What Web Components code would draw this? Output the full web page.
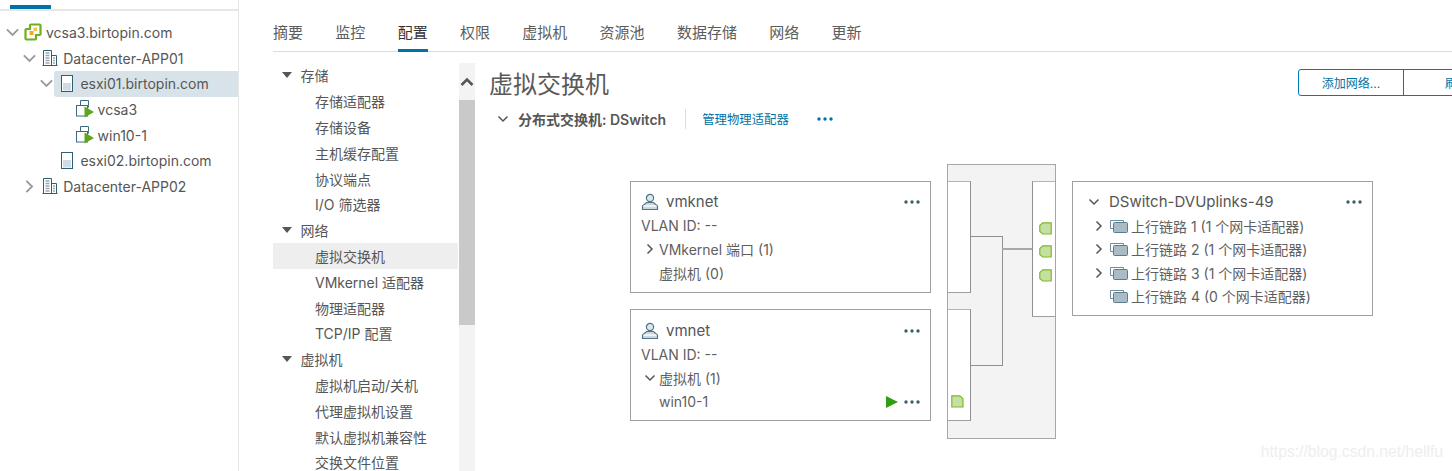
<!DOCTYPE html>
<html lang="zh-CN">
<head>
<meta charset="utf-8">
<title>虚拟交换机</title>
<style>
html, body { margin: 0; height: 471px; overflow: hidden; background: #fff; }
body {
	display: flex;
	font-family: Inter, "Noto Sans CJK SC", sans-serif;
	color: #565656;
}
</style>
</head>
<body>
<vc-tree>
	<vc-tree-row depth="0" twisty="open" icon="vcenter">vcsa3.birtopin.com</vc-tree-row>
	<vc-tree-row depth="1" twisty="open" icon="datacenter">Datacenter-APP01</vc-tree-row>
	<vc-tree-row depth="2" twisty="open" icon="host" selected>esxi01.birtopin.com</vc-tree-row>
	<vc-tree-row depth="3" icon="vm">vcsa3</vc-tree-row>
	<vc-tree-row depth="3" icon="vm">win10-1</vc-tree-row>
	<vc-tree-row depth="2" icon="host">esxi02.birtopin.com</vc-tree-row>
	<vc-tree-row depth="1" twisty="closed" icon="datacenter">Datacenter-APP02</vc-tree-row>
</vc-tree>

<vc-main>
	<vc-tabs slot="tabs">
		<vc-tab>摘要</vc-tab>
		<vc-tab>监控</vc-tab>
		<vc-tab active>配置</vc-tab>
		<vc-tab>权限</vc-tab>
		<vc-tab>虚拟机</vc-tab>
		<vc-tab>资源池</vc-tab>
		<vc-tab>数据存储</vc-tab>
		<vc-tab>网络</vc-tab>
		<vc-tab>更新</vc-tab>
	</vc-tabs>

	<vc-nav slot="nav">
		<vc-nav-item group>存储</vc-nav-item>
		<vc-nav-item>存储适配器</vc-nav-item>
		<vc-nav-item>存储设备</vc-nav-item>
		<vc-nav-item>主机缓存配置</vc-nav-item>
		<vc-nav-item>协议端点</vc-nav-item>
		<vc-nav-item>I/O 筛选器</vc-nav-item>
		<vc-nav-item group>网络</vc-nav-item>
		<vc-nav-item selected>虚拟交换机</vc-nav-item>
		<vc-nav-item>VMkernel 适配器</vc-nav-item>
		<vc-nav-item>物理适配器</vc-nav-item>
		<vc-nav-item>TCP/IP 配置</vc-nav-item>
		<vc-nav-item group>虚拟机</vc-nav-item>
		<vc-nav-item>虚拟机启动/关机</vc-nav-item>
		<vc-nav-item>代理虚拟机设置</vc-nav-item>
		<vc-nav-item>默认虚拟机兼容性</vc-nav-item>
		<vc-nav-item>交换文件位置</vc-nav-item>
	</vc-nav>

	<vc-switch-panel>
		<vc-card slot="left" card-title="vmknet" icon="portgroup" tall="112" pad="7">
			<vc-card-row>VLAN ID: --</vc-card-row>
			<vc-card-row twisty="closed">VMkernel 端口 (1)</vc-card-row>
			<vc-card-row indent>虚拟机 (0)</vc-card-row>
		</vc-card>
		<vc-card slot="left" card-title="vmnet" icon="portgroup" tall="112" pad="8">
			<vc-card-row>VLAN ID: --</vc-card-row>
			<vc-card-row twisty="open">虚拟机 (1)</vc-card-row>
			<vc-card-row indent actions>win10-1</vc-card-row>
		</vc-card>
		<vc-bridge slot="bridge"></vc-bridge>
		<vc-card slot="right" card-title="DSwitch-DVUplinks-49" twisty tall="135" pad="7">
			<vc-uplink-row twisty>上行链路 1 (1 个网卡适配器)</vc-uplink-row>
			<vc-uplink-row twisty>上行链路 2 (1 个网卡适配器)</vc-uplink-row>
			<vc-uplink-row twisty>上行链路 3 (1 个网卡适配器)</vc-uplink-row>
			<vc-uplink-row>上行链路 4 (0 个网卡适配器)</vc-uplink-row>
		</vc-card>
	</vc-switch-panel>
</vc-main>
<vc-watermark>https://blog.csdn.net/hellfu</vc-watermark>

<script>
// all icons live here so the rows only have to pass a name
const ICONS = {
	vcenter: `<svg viewBox="0 0 18 18" width="18" height="18">
		<path d="M7 1.500h8.500a1 1 0 0 1 1 1V11a1 1 0 0 1-1 1H12v3.500a1 1 0 0 1-1 1H2.500a1 1 0 0 1-1-1V7a1 1 0 0 1 1-1H6V2.500a1 1 0 0 1 1-1z" fill="#fff" stroke="#6fae1e" stroke-width="2.200"/>
		<rect x="5.500" y="8" width="4" height="4" fill="#f5a623"/>
		<rect x="9.500" y="4.500" width="3.500" height="3.500" fill="#f8c34a"/>
	</svg>`,
	datacenter: `<svg viewBox="0 0 16 16" width="16" height="16" fill="none" stroke="#2f5f76">
		<path d="M.5 15.500h15M1.500 15.500V.5h8v15M9.500 5.500h5v10"/>
		<path d="M3.500 3h4M3.500 5.500h4M3.500 8h4M3.500 10.500h4M3.500 13h4M11 8h2M11 10.500h2M11 13h2" stroke="#9aa9b0" stroke-width="1.500"/>
	</svg>`,
	host: `<svg viewBox="0 0 14 18" width="14" height="18">
		<rect x="1.500" y=".5" width="11" height="16" fill="#fff" stroke="#2f5f76"/>
		<rect x="3" y="8" width="8" height="7.500" fill="#cfdde3"/>
	</svg>`,
	vm: `<svg viewBox="0 0 18 18" width="18" height="18" fill="none" stroke="#3c6a80">
		<path d="M4.500 5V.5h8V5"/>
		<rect x=".5" y="5.500" width="11" height="10.500" fill="#fff"/>
		<path d="M4.500 5.500h8v2"/>
		<path d="M8.500 6.500v11L18 12z" fill="#5da51c" stroke="none"/>
	</svg>`,
	portgroup: `<svg viewBox="0 0 18 18" width="18" height="18" fill="none" stroke="#4f7486" stroke-width="1.200">
		<circle cx="9" cy="5" r="3.600" fill="#dfe7eb"/>
		<path d="M5.500 9.500h7l4 3.500v3.500H1.500V13z" fill="#cbd8de"/>
		<path d="M2.500 13h13" stroke="#fff" stroke-width="1.400"/>
	</svg>`,
	uplink: `<svg viewBox="0 0 18 14" width="18" height="14">
		<path d="M.5 1.500h13v2" fill="none" stroke="#6f8d9c"/>
		<path d="M.5 1.500v8h3" fill="none" stroke="#6f8d9c"/>
		<rect x="3.500" y="3.500" width="14" height="10" rx="1" fill="#a9bcc6" stroke="#5b7c8c"/>
	</svg>`,
	play: `<svg viewBox="0 0 12 12" width="12" height="12"><path d="M0 0v12l12-6z" fill="#2f9e12"/></svg>`
};

function chevron(dir, color, size = 12) {
	const d = dir === 'open' ? 'M1.500 3.500 6 8l4.500-4.500' : 'M3.500 1.500 8 6l-4.500 4.500';
	return `<svg viewBox="0 0 12 12" width="${size}" height="${size}" fill="none" stroke="${color}" stroke-width="1.500"><path d="${d}"/></svg>`;
}

function dots(color) {
	return `<svg viewBox="0 0 16 4" width="16" height="4" fill="${color}"><circle cx="2" cy="2" r="1.700"/><circle cx="8" cy="2" r="1.700"/><circle cx="14" cy="2" r="1.700"/></svg>`;
}

class VcTree extends HTMLElement {
	constructor() {
		super();
		this.shadow = this.attachShadow({mode: 'open'});
	}
	connectedCallback() {
		this.shadow.innerHTML = `
		<style>
		:host { display: block; flex: none; width: 239px; box-sizing: border-box; border-right: 1px solid #e6e6e6; }
		.strip { height: 9px; border-bottom: 2px solid #e6e6e6; box-sizing: content-box; }
		.strip i { display: block; width: 41px; height: 4px; margin-left: 10px; position: relative; top: 5px; background: #0072a3; }
		.rows { padding-top: 8.500px; }
		</style>
		<div class="strip"><i></i></div>
		<div class="rows"><slot></slot></div>`;
	}
}

class VcTreeRow extends HTMLElement {
	constructor() {
		super();
		this.shadow = this.attachShadow({mode: 'open'});
	}
	get depth() {
		return Number(this.getAttribute('depth'));
	}
	connectedCallback() {
		const twisty = this.getAttribute('twisty');
		this.shadow.innerHTML = `
		<style>
		:host { display: flex; height: 25.700px; align-items: stretch; font-size: 14px; color: #565656; padding-left: ${4 + this.depth * 17.2}px; }
		.twisty { flex: none; width: 16px; display: flex; align-items: center; justify-content: center; }
		.body { flex: 1; display: flex; align-items: center; padding-left: 4px; gap: 4px; border-radius: 3px 0 0 3px; white-space: nowrap; }
		:host([selected]) .body { background: #d8e3e9; }
		.icon { flex: none; width: 18px; display: flex; justify-content: center; }
		</style>
		<span class="twisty">${twisty ? chevron(twisty, '#9a9a9a', 15) : ''}</span>
		<span class="body"><span class="icon">${ICONS[this.getAttribute('icon')]}</span><slot></slot></span>`;
	}
}

class VcMain extends HTMLElement {
	constructor() {
		super();
		this.shadow = this.attachShadow({mode: 'open'});
	}
	connectedCallback() {
		this.shadow.innerHTML = `
		<style>
		:host { display: flex; flex-direction: column; flex: 1; min-width: 0; padding-left: 34px; background: #fff; }
		.split { flex: 1; display: flex; min-height: 0; }
		</style>
		<slot name="tabs"></slot>
		<div class="split"><slot name="nav"></slot><slot></slot></div>`;
	}
}

class VcTabs extends HTMLElement {
	constructor() {
		super();
		this.shadow = this.attachShadow({mode: 'open'});
	}
	connectedCallback() {
		this.shadow.innerHTML = `
		<style>
		:host { display: flex; flex: none; height: 52px; box-sizing: border-box; gap: 32.300px; align-items: flex-end; border-bottom: 1px solid #dcdcdc; }
		</style>
		<slot></slot>`;
	}
}

class VcTab extends HTMLElement {
	constructor() {
		super();
		this.shadow = this.attachShadow({mode: 'open'});
	}
	connectedCallback() {
		this.shadow.innerHTML = `
		<style>
		:host { display: block; font-size: 15px; line-height: 20px; padding-bottom: 6px; border-bottom: 3px solid transparent; color: #5c5c5c; margin-bottom: -1px; }
		:host([active]) { border-bottom-color: #0072a3; color: #333; }
		</style>
		<slot></slot>`;
	}
}

class VcNav extends HTMLElement {
	constructor() {
		super();
		this.shadow = this.attachShadow({mode: 'open'});
	}
	connectedCallback() {
		this.shadow.innerHTML = `
		<style>
		:host { display: flex; flex: none; width: 202px; }
		.list { flex: 1; padding-top: 10.500px; overflow: hidden; }
		.bar { flex: none; width: 16px; margin-top: 11px; background: #f3f3f3; display: flex; flex-direction: column; }
		.up { flex: none; height: 37px; display: flex; align-items: center; justify-content: center; }
		.thumb { flex: none; height: 225px; background: #c9c9c9; }
		</style>
		<div class="list"><slot></slot></div>
		<div class="bar">
			<div class="up"><svg viewBox="0 0 14 10" width="14" height="10" fill="none" stroke="#555" stroke-width="2.500"><path d="M1.500 8 7 2.500 12.500 8"/></svg></div>
			<div class="thumb"></div>
		</div>`;
	}
}

class VcNavItem extends HTMLElement {
	constructor() {
		super();
		this.shadow = this.attachShadow({mode: 'open'});
	}
	connectedCallback() {
		const group = this.hasAttribute('group');
		this.shadow.innerHTML = `
		<style>
		:host { display: flex; align-items: center; height: 25.800px; font-size: 14px; color: #565656; white-space: nowrap; padding-left: ${group ? 9 : 42}px; margin-right: 1px; }
		:host([selected]) { background: #eeeeee; }
		.tri { width: 0; height: 0; border-left: 5.500px solid transparent; border-right: 5.500px solid transparent; border-top: 6px solid #565656; margin-right: 8.500px; }
		</style>
		${group ? '<span class="tri"></span>' : ''}<slot></slot>`;
	}
}

class VcSwitchPanel extends HTMLElement {
	constructor() {
		super();
		this.shadow = this.attachShadow({mode: 'open'});
	}
	connectedCallback() {
		this.shadow.innerHTML = `
		<style>
		:host { display: block; flex: 1; min-width: 0; padding: 17px 0 0 14px; overflow: hidden; color: #565656; }
		.head { display: flex; align-items: flex-start; height: 32px; }
		h1 { margin: 0; font-size: 24px; font-weight: 400; line-height: 32px; color: #5a5a5a; }
		.btns { display: flex; flex: none; margin-left: auto; margin-right: -59px; height: 27px; border: 1px solid #0079b8; border-radius: 3px; box-sizing: border-box; font-size: 12px; color: #0072a3; }
		.btns span { display: flex; align-items: center; justify-content: center; width: 104px; }
		.btns span + span { width: 106px; border-left: 1px solid #0079b8; }
		.bar { display: flex; align-items: center; height: 24px; margin-top: 6px; padding-left: 8px; }
		.bar b { font-size: 14px; font-weight: 600; margin-left: 9px; color: #565656; white-space: nowrap; }
		.bar i { width: 1px; height: 20px; background: #dcdcdc; margin: 0 16px 0 19px; }
		.bar a { font-size: 12.400px; color: #0072a3; white-space: nowrap; }
		.bar .more { margin-left: 28px; display: flex; }
		.diagram { display: flex; gap: 16px; padding: 33px 0 0 141px; align-items: flex-start; }
		.col { display: flex; flex-direction: column; gap: 16px; padding-top: 17px; flex: none; }
		</style>
		<div class="head"><h1>虚拟交换机</h1><div class="btns"><span>添加网络...</span><span>刷新</span></div></div>
		<div class="bar">${chevron('open', '#565656')}<b>分布式交换机: DSwitch</b><i></i><a>管理物理适配器</a><span class="more">${dots('#0072a3')}</span></div>
		<div class="diagram">
			<div class="col"><slot name="left"></slot></div>
			<slot name="bridge"></slot>
			<div class="col"><slot name="right"></slot></div>
		</div>`;
	}
}

class VcCard extends HTMLElement {
	constructor() {
		super();
		this.shadow = this.attachShadow({mode: 'open'});
	}
	get cardTitle() {
		return this.getAttribute('card-title');
	}
	connectedCallback() {
		const icon = this.getAttribute('icon');
		const lead = this.hasAttribute('twisty')
			? `<span class="tw">${chevron('open', '#565656')}</span>`
			: `<span class="ic">${ICONS[icon]}</span>`;
		this.shadow.innerHTML = `
		<style>
		:host { display: block; box-sizing: border-box; width: 301px; height: ${this.getAttribute('tall')}px; border: 1px solid #a0a0a0; padding: ${this.getAttribute('pad')}px 10px 0; background: #fff; }
		.head { display: flex; align-items: center; height: 25px; font-size: 15px; color: #555; white-space: nowrap; }
		.ic { flex: none; width: 25px; display: flex; }
		.tw { flex: none; width: 22px; margin-right: 4px; display: flex; justify-content: center; }
		.menu { margin-left: auto; display: flex; }
		</style>
		<div class="head">${lead}<span>${this.cardTitle}</span><span class="menu">${dots('#3f5c69')}</span></div>
		<slot></slot>`;
	}
}

class VcCardRow extends HTMLElement {
	constructor() {
		super();
		this.shadow = this.attachShadow({mode: 'open'});
	}
	connectedCallback() {
		const twisty = this.getAttribute('twisty');
		const pad = this.hasAttribute('indent') ? 18 : 0;
		this.shadow.innerHTML = `
		<style>
		:host { display: flex; align-items: center; height: 23.600px; font-size: 14px; color: #5f5f5f; white-space: nowrap; padding-left: ${pad}px; }
		.tw { flex: none; width: 18px; display: flex; justify-content: center; }
		.act { margin-left: auto; display: flex; align-items: center; gap: 6px; }
		</style>
		${twisty ? `<span class="tw">${chevron(twisty, '#565656')}</span>` : ''}<slot></slot>
		${this.hasAttribute('actions') ? `<span class="act">${ICONS.play}${dots('#3f5c69')}</span>` : ''}`;
	}
}

class VcUplinkRow extends HTMLElement {
	constructor() {
		super();
		this.shadow = this.attachShadow({mode: 'open'});
	}
	connectedCallback() {
		this.shadow.innerHTML = `
		<style>
		:host { display: flex; align-items: center; height: 23.500px; font-size: 14px; color: #5f5f5f; white-space: nowrap; padding-left: 8px; }
		.tw { flex: none; width: 16px; display: flex; justify-content: center; }
		.ic { flex: none; width: 21px; display: flex; margin-left: 3px; }
		</style>
		<span class="tw">${this.hasAttribute('twisty') ? chevron('closed', '#565656') : ''}</span>
		<span class="ic">${ICONS.uplink}</span><slot></slot>`;
	}
}

// the bridge is a free canvas: its pieces are diagram nodes with their own coordinates
class VcBridge extends HTMLElement {
	constructor() {
		super();
		this.shadow = this.attachShadow({mode: 'open'});
	}
	port(x, y, flip) {
		const d = flip ? 'M.8.8h8l3.200 3v8.200H.8z' : 'M3.800.8h8.400v11.200H3.800L.8 9.500V3.500z';
		return `<svg class="node" style="left:${x}px;top:${y}px" viewBox="0 0 13 13" width="13" height="13"><path d="${d}" fill="#c6e0a4" stroke="#7fb82a" stroke-width="1.200"/></svg>`;
	}
	connectedCallback() {
		this.shadow.innerHTML = `
		<style>
		:host { display: block; position: relative; flex: none; width: 109px; height: 275px; box-sizing: border-box; border: 1px solid #a6a6a6; background: #f3f3f3; }
		.node, .panel, .line { position: absolute; }
		.panel { background: #fff; border: 1px solid #8f8f8f; border-top-color: #b5b5b5; border-bottom-color: #a0a0a0; box-sizing: border-box; }
		.line { background: #8f8f8f; }
		</style>
		<div class="panel" style="left:0;top:16px;width:23px;height:112px;border-left:0"></div>
		<div class="panel" style="left:0;top:144px;width:23px;height:112px;border-left:0"></div>
		<div class="panel" style="left:84px;top:16px;width:23px;height:136px;border-right:0"></div>
		<div class="line" style="left:23px;top:71px;width:31px;height:1px"></div>
		<div class="line" style="left:23px;top:200px;width:31px;height:1px"></div>
		<div class="line" style="left:54px;top:71px;width:1px;height:130px"></div>
		<div class="line" style="left:54px;top:83px;width:30px;height:2px;background:#a8a8a8"></div>
		${this.port(91, 57)}${this.port(91, 80)}${this.port(91, 104)}${this.port(3, 230, true)}`;
	}
}

class VcWatermark extends HTMLElement {
	constructor() {
		super();
		this.shadow = this.attachShadow({mode: 'open'});
	}
	connectedCallback() {
		this.shadow.innerHTML = `
		<style>
		:host { position: absolute; right: 9px; bottom: 10px; font: 15.700px "Liberation Sans", sans-serif; color: #eeeeee; }
		</style>
		<slot></slot>`;
	}
}

customElements.define('vc-tree', VcTree);
customElements.define('vc-tree-row', VcTreeRow);
customElements.define('vc-main', VcMain);
customElements.define('vc-tabs', VcTabs);
customElements.define('vc-tab', VcTab);
customElements.define('vc-nav', VcNav);
customElements.define('vc-nav-item', VcNavItem);
customElements.define('vc-switch-panel', VcSwitchPanel);
customElements.define('vc-card', VcCard);
customElements.define('vc-card-row', VcCardRow);
customElements.define('vc-uplink-row', VcUplinkRow);
customElements.define('vc-bridge', VcBridge);
customElements.define('vc-watermark', VcWatermark);
</script>
</body>
</html>
